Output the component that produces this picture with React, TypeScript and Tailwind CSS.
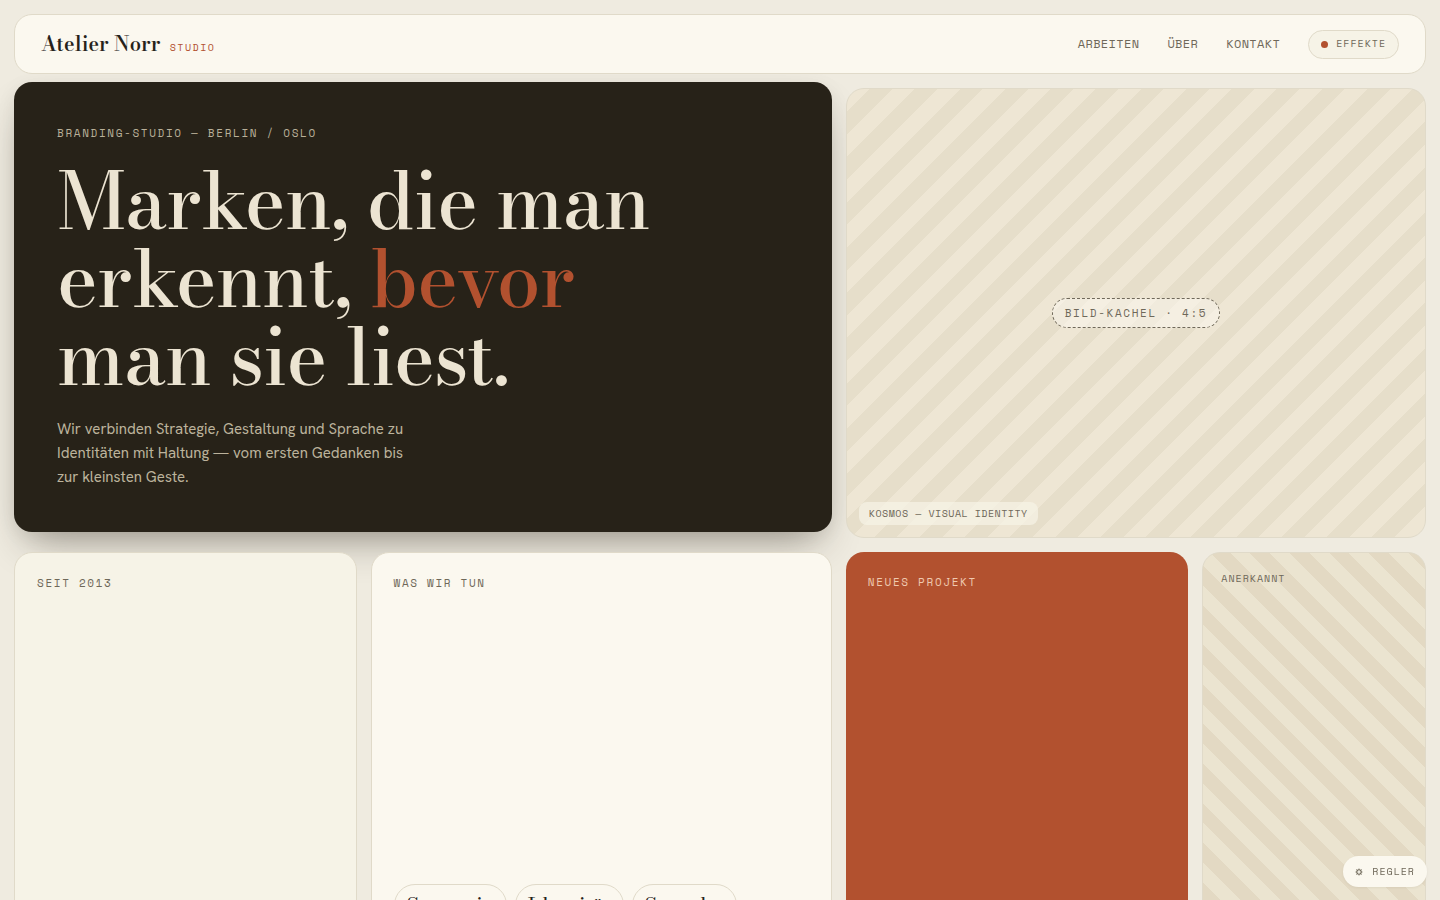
import type { ReactNode } from 'react';

const mono = "font-['Space_Mono','Liberation_Mono',monospace]";
const serif = "font-['Bodoni_Moda','Liberation_Serif',serif]";

const navLinks = [
  { label: 'Arbeiten', href: '#arbeiten' },
  { label: 'Über', href: '#ueber' },
  { label: 'Kontakt', href: '#kontakt' },
];

const services = ['Strategie', 'Identität', 'Sprache'];

function Label({ children, className }: { children: ReactNode; className: string }) {
  return <p className={`${mono} text-[11px] leading-4 tracking-[0.15em] uppercase ${className}`}>{children}</p>;
}

function GearIcon() {
  return (
    <svg viewBox="0 0 8 8" className="size-2" fill="none" stroke="currentColor" aria-hidden="true">
      <circle cx="4" cy="4" r="2.2" strokeWidth="1.1" />
      <circle cx="4" cy="4" r="0.4" fill="currentColor" stroke="none" />
      <path
        d="M4 0.6v1M4 6.4v1M0.6 4h1M6.4 4h1M1.5 1.5l0.8 0.8M5.7 5.7l0.8 0.8M1.5 6.5l0.8-0.8M5.7 2.3l0.8-0.8"
        strokeWidth="1"
      />
    </svg>
  );
}

function Header() {
  return (
    <header className="relative z-10 flex h-[60px] items-center justify-between rounded-[18px] border border-[#e0dac9] bg-[#fbf8ef] px-[26px]">
      <a href="#start" className="flex items-baseline gap-[9px]">
        <span className={`${serif} text-xl leading-7 font-semibold tracking-[0.01em] text-[#26221a]`}>Atelier Norr</span>
        <span className={`${mono} text-[10px] leading-4 tracking-[0.15em] text-[#b2512f] uppercase`}>Studio</span>
      </a>
      <nav className="flex items-center gap-7" aria-label="Hauptnavigation">
        {navLinks.map((link) => (
          <a key={link.href} href={link.href} className={`${mono} text-xs leading-4 tracking-[0.03em] text-[#6f6859] uppercase`}>
            {link.label}
          </a>
        ))}
        <button
          type="button"
          className={`${mono} flex h-[29px] items-center gap-2 rounded-full border border-[#e0dac9] bg-[#f6f3e7] px-3 text-[10px] leading-4 tracking-widest text-[#6f6859] uppercase`}
        >
          <span className="size-[7px] rounded-full bg-[#b2512f]" />
          Effekte
        </button>
      </nav>
    </header>
  );
}

export default function App() {
  return (
    <div id="start" className="flex min-h-screen flex-col gap-[14px] bg-[#efebe0] p-[14px]">
      <Header />
      <main className="grid grid-cols-12 gap-[14px]">
        <section className="col-span-7 -translate-y-1.5 rounded-[18px] bg-[#272218] p-[43px] shadow-[0_20px_40px_-14px_rgba(39,34,24,0.45),0_4px_20px_rgba(39,34,24,0.06)]">
          <Label className="text-[#b9b099]">Branding-Studio — Berlin / Oslo</Label>
          <h1 className={`${serif} mt-[21px] max-w-[640px] text-[78px] leading-[78px] font-medium tracking-[-0.012em] text-[#ece4d2]`}>
            Marken, die man erkennt, <em className="text-[#b2512f] not-italic">bevor</em> man sie liest.
          </h1>
          <p className="mt-[21px] max-w-[360px] font-['Hanken_Grotesk',Roboto,sans-serif] text-[15px] leading-6 text-[#bcb39c]">
            Wir verbinden Strategie, Gestaltung und Sprache zu Identitäten mit Haltung — vom ersten Gedanken bis zur
            kleinsten Geste.
          </p>
        </section>

        <section
          id="arbeiten"
          className="relative col-span-5 grid place-items-center rounded-[18px] border border-[#e0dac9] bg-[repeating-linear-gradient(135deg,#eee6d4_0_16px,#e6deca_16px_32px)]"
        >
          <span
            className={`${mono} rounded-full border border-dashed border-[#6f6859] bg-[#fbf8ef]/50 px-3 py-1.5 text-[11px] leading-4 tracking-[0.15em] text-[#6f6859] uppercase`}
          >
            Bild-Kachel · 4:5
          </span>
          <span
            className={`${mono} absolute bottom-3 left-3 rounded-lg bg-[#f6f3e7]/70 px-[10px] py-1 text-[10px] leading-[15px] tracking-wider text-[#6f6859] uppercase`}
          >
            Kosmos — Visual Identity
          </span>
        </section>

        <section id="ueber" className="relative col-span-3 rounded-[18px] border border-[#e0dac9] bg-[#f6f3e7] p-[22px]">
          <Label className="text-[#6f6859]">Seit 2013</Label>
        </section>

        <section className="relative col-span-4 flex min-h-[450px] flex-col justify-between rounded-[18px] border border-[#e0dac9] bg-[#fbf8ef] p-[22px]">
          <Label className="text-[#6f6859]">Was wir tun</Label>
          <ul className="flex min-h-[95px] flex-wrap content-start gap-2">
            {services.map((service) => (
              <li key={service} className={`${serif} rounded-full border border-[#e0dac9] px-3 py-1 text-[21px] leading-8 text-[#26221a]`}>
                {service}
              </li>
            ))}
          </ul>
        </section>

        <section id="kontakt" className="relative col-span-3 rounded-[18px] bg-[#b2512f] p-[22px]">
          <Label className="text-[#efc9b0]">Neues Projekt</Label>
        </section>

        <section className="relative col-span-2 rounded-[18px] border border-[#e0dac9] bg-[repeating-linear-gradient(45deg,#ebe4d0_0_14px,#e3d9c3_14px_28px)] p-[18px]">
          <p className={`${mono} text-[10px] leading-4 tracking-widest text-[#6f6859] uppercase`}>Anerkannt</p>
        </section>
      </main>

      <button
        type="button"
        className={`${mono} fixed right-[13px] bottom-[13px] z-20 flex h-[31px] items-center gap-[9px] rounded-full bg-[#fbf8ef] px-3 text-[10px] leading-4 tracking-widest text-[#6f6859] uppercase shadow-sm shadow-[#272218]/5`}
      >
        <GearIcon />
        Regler
      </button>
    </div>
  );
}
